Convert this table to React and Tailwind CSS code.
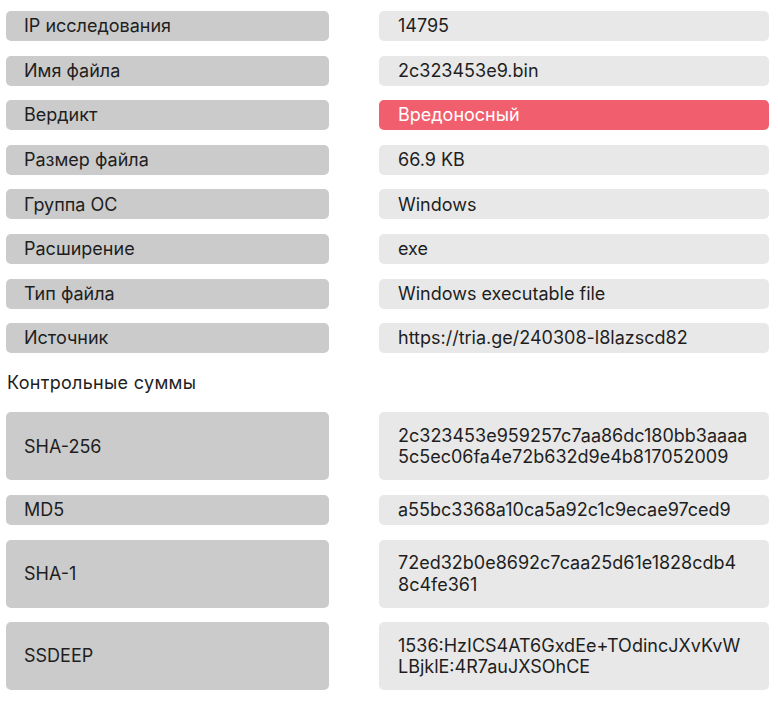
const mainRows = [
  { label: "IP исследования", value: "14795" },
  { label: "Имя файла", value: "2c323453e9.bin" },
  { label: "Вердикт", value: "Вредоносный", danger: true },
  { label: "Размер файла", value: "66.9 KB" },
  { label: "Группа ОС", value: "Windows" },
  { label: "Расширение", value: "exe" },
  { label: "Тип файла", value: "Windows executable file" },
  { label: "Источник", value: "https://tria.ge/240308-l8lazscd82" },
];

const hashRows = [
  { label: "SHA-256", lines: ["2c323453e959257c7aa86dc180bb3aaaa", "5c5ec06fa4e72b632d9e4b817052009"] },
  { label: "MD5", lines: ["a55bc3368a10ca5a92c1c9ecae97ced9"] },
  { label: "SHA-1", lines: ["72ed32b0e8692c7caa25d61e1828cdb4", "8c4fe361"] },
  { label: "SSDEEP", lines: ["1536:HzICS4AT6GxdEe+TOdincJXvKvW", "LBjklE:4R7auJXSOhCE"] },
];

const Label = ({ children }) => (
  <div className="flex items-center rounded-[5px] bg-[#cbcbcb] px-[18px]">{children}</div>
);

const App = () => {
  return (
    <div
      className="min-h-screen bg-white pl-[6px] pt-[11px] text-[18px] leading-[21.5px] text-[#1e1e1e]"
      style={{ fontFamily: "Inter, 'DejaVu Sans', sans-serif" }}
    >
      <div className="grid grid-cols-[323px_390px] gap-x-[50px] gap-y-[14.6px]">
        {mainRows.map((row) => (
          <div key={row.label} className="contents">
            <Label>{row.label}</Label>
            <div
              className={
                row.danger
                  ? "flex h-[30px] items-center rounded-[5px] bg-[#f15f6e] px-[19px] text-white"
                  : "flex h-[30px] items-center rounded-[5px] bg-[#e8e8e8] px-[19px]"
              }
            >
              {row.value}
            </div>
          </div>
        ))}

        <div className="col-span-2 flex h-[30px] items-center pl-[1px] tracking-[0.3px]">Контрольные суммы</div>

        {hashRows.map((row) => (
          <div key={row.label} className="contents">
            <Label>{row.label}</Label>
            <div
              className={
                row.lines.length > 1
                  ? "flex flex-col justify-center rounded-[5px] bg-[#e8e8e8] px-[19px] py-[12.5px] whitespace-nowrap"
                  : "flex h-[30px] flex-col justify-center rounded-[5px] bg-[#e8e8e8] px-[19px] whitespace-nowrap"
              }
            >
              {row.lines.map((line) => (
                <span key={line}>{line}</span>
              ))}
            </div>
          </div>
        ))}
      </div>
    </div>
  );
};

export default App;
